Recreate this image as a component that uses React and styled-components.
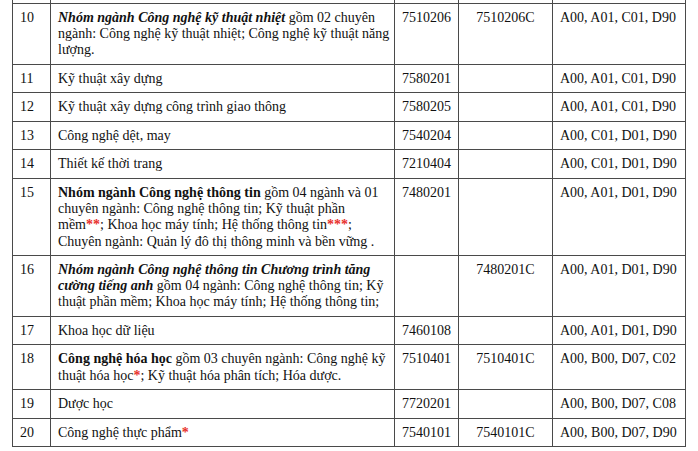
import React from "react";
import styled, { createGlobalStyle } from "styled-components";

const GlobalStyle = createGlobalStyle`
  html, body {
    margin: 0;
    padding: 0;
    background: #fff;
  }
  body {
    font-family: "Liberation Serif", "Times New Roman", serif;
    color: #111;
  }
`;

const Page = styled.div`
  width: 698px;
  height: 451px;
  overflow: hidden;
  padding-left: 12px;
  box-sizing: border-box;
`;

const Table = styled.table`
  border-collapse: collapse;
  table-layout: fixed;
  width: 674px;
  font-size: 14px;
  line-height: 16.2px;
`;

const Cell = styled.td`
  border: 1px solid #4a4a4a;
  padding: 6px ${(props) => (props.wide ? "3px" : "7px")} 5.3px 7px;
  vertical-align: top;
  text-align: ${(props) => props.align || "left"};
`;

const StubCell = styled.td`
  border-left: 1px solid #4a4a4a;
  border-right: 1px solid #4a4a4a;
  border-bottom: 1px solid #4a4a4a;
  height: 3px;
  padding: 0;
`;

const BoldItalic = styled.b`
  font-style: italic;
  font-weight: bold;
`;

const Star = styled.span`
  color: #e8302a;
  font-weight: bold;
`;

const rows = [
  {
    no: 10,
    name: (
      <>
        <BoldItalic>Nhóm ngành Công nghệ kỹ thuật nhiệt</BoldItalic> gồm 02 chuyên
        ngành: Công nghệ kỹ thuật nhiệt; Công nghệ kỹ thuật năng lượng.
      </>
    ),
    code: "7510206",
    code2: "7510206C",
    combo: "A00, A01, C01, D90",
  },
  { no: 11, name: "Kỹ thuật xây dựng", code: "7580201", combo: "A00, A01, C01, D90" },
  {
    no: 12,
    name: "Kỹ thuật xây dựng công trình giao thông",
    code: "7580205",
    combo: "A00, A01, C01, D90",
  },
  { no: 13, name: "Công nghệ dệt, may", code: "7540204", combo: "A00, C01, D01, D90" },
  { no: 14, name: "Thiết kế thời trang", code: "7210404", combo: "A00, C01, D01, D90" },
  {
    no: 15,
    name: (
      <>
        <b>Nhóm ngành Công nghệ thông tin</b> gồm 04 ngành và 01 chuyên ngành:
        Công nghệ thông tin; Kỹ thuật phần mềm<Star>**</Star>; Khoa học máy
        tính; Hệ thống thông tin<Star>***</Star>; Chuyên ngành: Quản lý đô thị
        thông minh và bền vững .
      </>
    ),
    code: "7480201",
    combo: "A00, A01, D01, D90",
  },
  {
    no: 16,
    name: (
      <>
        <BoldItalic>
          Nhóm ngành Công nghệ thông tin Chương trình tăng cường tiếng anh
        </BoldItalic>{" "}
        gồm 04 ngành: Công nghệ thông tin; Kỹ thuật phần mềm; Khoa học máy tính;
        Hệ thống thông tin;
      </>
    ),
    code2: "7480201C",
    combo: "A00, A01, D01, D90",
  },
  { no: 17, name: "Khoa học dữ liệu", code: "7460108", combo: "A00, A01, D01, D90" },
  {
    no: 18,
    name: (
      <>
        <b>Công nghệ hóa học</b> gồm 03 chuyên ngành: Công nghệ kỹ thuật hóa
        học<Star>*</Star>; Kỹ thuật hóa phân tích; Hóa dược.
      </>
    ),
    code: "7510401",
    code2: "7510401C",
    combo: "A00, B00, D07, C02",
  },
  { no: 19, name: "Dược học", code: "7720201", combo: "A00, B00, D07, C08" },
  {
    no: 20,
    name: (
      <>
        Công nghệ thực phẩm<Star>*</Star>
      </>
    ),
    code: "7540101",
    code2: "7540101C",
    combo: "A00, B00, D07, D90",
  },
];

const App = () => {
  return (
    <>
      <GlobalStyle />
      <Page>
        <Table>
          <colgroup>
            <col style={{ width: 38 }} />
            <col style={{ width: 344 }} />
            <col style={{ width: 64 }} />
            <col style={{ width: 94 }} />
            <col style={{ width: 133 }} />
          </colgroup>
          <tbody>
            <tr>
              <StubCell />
              <StubCell />
              <StubCell />
              <StubCell />
              <StubCell />
            </tr>
            {rows.map((r) => (
              <tr key={r.no}>
                <Cell>{r.no}</Cell>
                <Cell wide>{r.name}</Cell>
                <Cell>{r.code}</Cell>
                <Cell align="center">{r.code2}</Cell>
                <Cell>{r.combo}</Cell>
              </tr>
            ))}
          </tbody>
        </Table>
      </Page>
    </>
  );
};

export default App;
